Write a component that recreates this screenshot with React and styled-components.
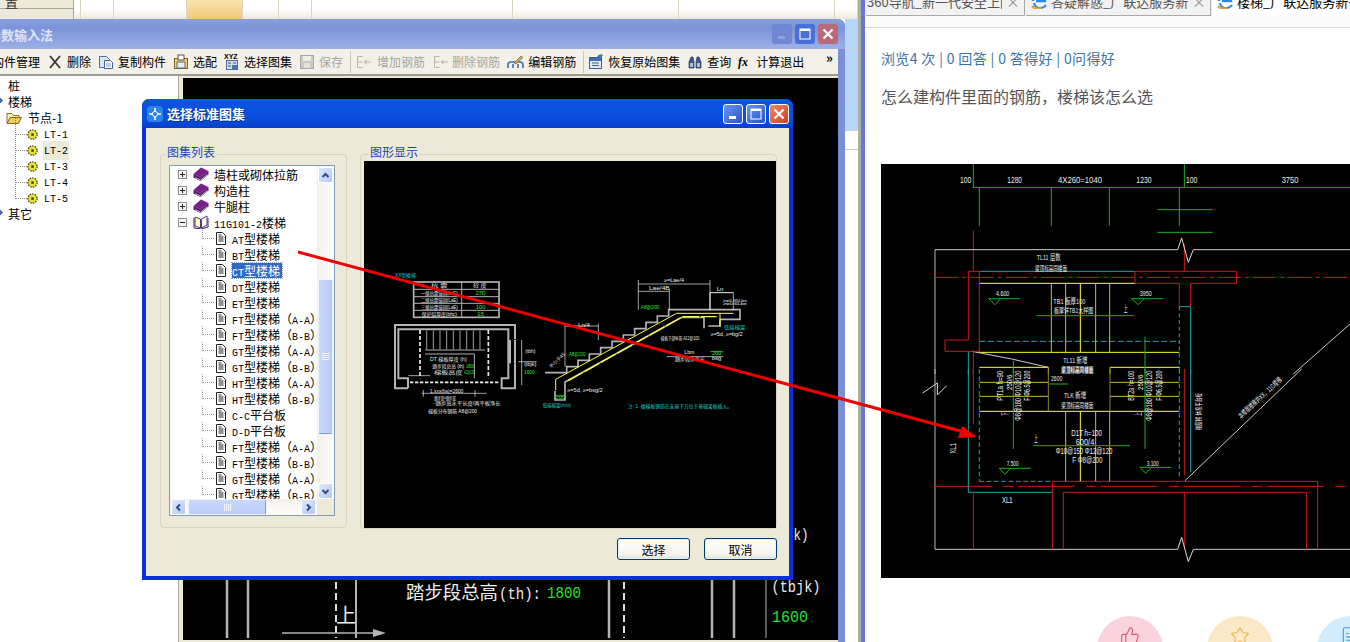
import React from 'react';
import styled, { createGlobalStyle } from 'styled-components';
import { ThumbsUp, Star, FileText } from 'lucide-react';

const Global = createGlobalStyle`
html,body{margin:0;padding:0;background:#fff;}
body{font-family:"Noto Sans CJK SC","Liberation Sans",sans-serif;font-size:12px;color:#000;}
`;

const Desktop = styled.div`
position:relative;
width:1350px;
height:642px;
overflow:hidden;
display:flex;
background:#fff;
`;
const LeftArea = styled.div`
position:relative;
width:858px;
flex:none;
display:flex;
flex-direction:column;
`;
const SheetHeader = styled.div`
height:19px;
display:flex;
flex:none;
`;
const SheetSide = styled.div`
width:74px;
box-sizing:border-box;
background:#ece9d8;
border-right:1px solid #aca899;
overflow:hidden;
color:#333;
flex:none;
`;
const SheetSideLabel = styled.div`
height:12px;
line-height:12px;
margin-top:-4px;
padding-left:5px;
font-size:13px;
border-bottom:1px solid #aca899;
`;
const SheetCell = styled.div`
width:${(p) => p.$w}px;
box-sizing:border-box;
flex:none;
border-right:1px solid #d8d5c4;
background:${(p) => p.$hot ? 'linear-gradient(#fbe3b0,#f2c878)' : 'linear-gradient(#fff 50%,#ece9d8)'};
`;
const SheetBody = styled.div`
flex:1;
display:flex;
flex-direction:column;
align-items:flex-end;
`;
const SideRow = styled.div`
width:13px;
height:${(p) => p.$h}px;
background:${(p) => p.$blue ? '#b5d6f7' : '#fff'};
border-bottom:1px solid #c8d4e0;
flex:none;
`;
const SheetGap = styled.div`
width:13px;
height:18px;
border-bottom:1px solid #ccc;
`;
const Splitter = styled.div`
width:7px;
flex:none;
background:linear-gradient(90deg,#a9b0a8 0,#a9b0a8 3px,#6877d6 3px);
`;

/* outer window */
const OuterWindow = styled.div`
position:absolute;
left:-12px;
top:19px;
width:857px;
height:623px;
display:flex;
flex-direction:column;
background:#7b8fd8;
border-radius:7px 7px 0 0;
`;
const OuterTitle = styled.div`
height:30px;
flex:none;
display:flex;
align-items:center;
justify-content:space-between;
padding:0 7px 0 0;
background:linear-gradient(#8aa0dd,#7b93d9 30%,#9db0e6);
color:#dde4f6;
font-weight:bold;
font-size:13px;
border-radius:7px 7px 0 0;
`;
const TitleButtons = styled.div`
display:flex;
gap:${(p) => p.$gap}px;
`;
const TitleBtn = styled.div`
width:20px;
height:20px;
display:flex;
align-items:center;
justify-content:center;
border-radius:3px;
box-sizing:border-box;
border:1px solid ${(p) => p.$faded ? 'transparent' : '#fff'};
background:${(p) => {
    if (p.$close) return p.$faded ? '#b86a78' : 'linear-gradient(135deg,#ea8a6a,#d2401c)';
    if (p.$off) return '#7088d4';
    return p.$faded ? '#4a70d8' : 'linear-gradient(135deg,#6c96ef,#2552d0)';
  }};
`;
const Toolbar = styled.div`
height:27px;
flex:none;
margin-right:7px;
padding-left:4px;
display:flex;
align-items:center;
gap:7px;
background:#f3f1e7;
white-space:nowrap;
position:relative;
border-bottom:2px solid #9d9c93;
box-sizing:border-box;
`;
const ToolItem = styled.div`
display:flex;
align-items:center;
gap:${(p) => p.$gap ?? 4}px;
color:${(p) => p.$off ? '#a6a6a0' : '#000'};
line-height:16px;
`;
const ToolSep = styled.div`
width:1px;
height:22px;
background:#c9c7ba;
margin:0 -3px 0 0;
flex:none;
`;
const ToolMore = styled.div`
position:absolute;
right:5px;
top:0;
font-size:13px;
font-weight:bold;
line-height:18px;
`;
const OuterMain = styled.div`
flex:1;
display:flex;
min-height:0;
margin-right:7px;
background:#ece9d8;
`;
const LeftTree = styled.div`
width:191px;
flex:none;
padding-top:2px;
background:#fff;
border-right:1px solid #aca899;
box-sizing:border-box;
overflow:hidden;
`;
const MainRow = styled.div`
position:relative;
height:16px;
line-height:16px;
padding-left:${(p) => p.$indent}px;
display:flex;
align-items:center;
gap:5px;
&::before{
  content:${(p) => p.$mark ? '""' : 'none'};
  position:absolute;
  left:9px;
  top:4px;
  width:5px;
  height:5px;
  background:#3c66b4;
  transform:rotate(45deg);
}
&::after{
  content:${(p) => p.$leaf ? '""' : 'none'};
  position:absolute;
  left:27px;
  top:-8px;
  height:16px;
  width:11px;
  border-left:1px dotted #888;
  border-bottom:1px dotted #888;
}
`;
const MainText = styled.span`
padding:0 1px;
background:${(p) => p.$sel ? '#ece9d8' : 'transparent'};
z-index:1;
`;
const CadPanel = styled.div`
flex:1;
margin:2px 0 2px 4px;
background:#000;
overflow:hidden;
`;

/* dialog */
const Dialog = styled.div`
position:absolute;
left:142px;
top:99px;
width:651px;
height:481px;
display:flex;
flex-direction:column;
background:#0831d9;
border-radius:7px 7px 0 0;
z-index:2;
`;
const DialogTitle = styled.div`
height:29px;
flex:none;
padding:0 4px 0 5px;
display:flex;
align-items:center;
justify-content:space-between;
color:#fff;
font-weight:bold;
font-size:13px;
background:linear-gradient(#0a5be6,#0a55e0 10%,#0a4ddc 70%,#0840c8);
border-radius:7px 7px 0 0;
`;
const DialogName = styled.div`
display:flex;
align-items:center;
gap:4px;
text-shadow:1px 1px 0 #03308c;
`;
const DialogBody = styled.div`
flex:1;
margin:0 4px 4px;
padding:26px 12px 0 14px;
background:#ece9d8;
display:flex;
flex-direction:column;
`;
const Groups = styled.div`
display:flex;
gap:13px;
`;
const GroupBox = styled.div`
position:relative;
width:${(p) => p.$w}px;
height:${(p) => p.$h}px;
box-sizing:border-box;
padding:${(p) => p.$pad};
border:1px solid #d6d3c2;
border-radius:4px;
`;
const Legend = styled.div`
position:absolute;
left:${(p) => p.$x}px;
top:-11px;
padding:0 2px;
background:#ece9d8;
color:#1248b8;
line-height:16px;
`;
const ListBox = styled.div`
width:166px;
height:351px;
box-sizing:border-box;
border:1px solid #7f9db9;
background:#fff;
display:grid;
grid-template-columns:147px 17px;
grid-template-rows:333px 16px;
`;
const TreeArea = styled.div`
overflow:hidden;
`;
const TreeRow = styled.div`
position:relative;
height:16px;
display:flex;
align-items:center;
white-space:nowrap;
padding-left:${(p) => p.$leaf ? 45 : 8}px;
gap:5px;
&::before{
  content:${(p) => p.$leaf ? '""' : 'none'};
  position:absolute;
  left:32px;
  top:0;
  height:8px;
  width:11px;
  border-left:1px dotted #999;
  border-bottom:1px dotted #999;
}
`;
const TreeLabel = styled.span`
line-height:15px;
height:15px;
color:${(p) => p.$sel ? '#fff' : '#000'};
background:${(p) => p.$sel ? '#316ac5' : 'transparent'};
outline:${(p) => p.$sel ? '1px dotted #9ab' : 'none'};
padding-right:${(p) => p.$sel ? '2px' : '0'};
`;
const Ascii = styled.span`
font-family:"Liberation Mono",monospace;
font-size:10px;
`;
const ExpandBox = styled.span`
width:9px;
height:9px;
box-sizing:border-box;
border:1px solid #8b8b8b;
background:#f5f4ee;
position:relative;
flex:none;
margin-right:1px;
&::before{
  content:"";
  position:absolute;
  left:1px;
  right:1px;
  top:3px;
  height:1px;
  background:#222;
}
&::after{
  content:${(p) => p.$open ? 'none' : '""'};
  position:absolute;
  top:1px;
  bottom:1px;
  left:3px;
  width:1px;
  background:#222;
}
`;
const VScroll = styled.div`
display:flex;
flex-direction:column;
background:linear-gradient(90deg,#f3f1ec,#fdfdfa);
padding:1px 1px 0 1px;
`;
const HScroll = styled.div`
display:flex;
background:linear-gradient(#f3f1ec,#fdfdfa);
padding:0 1px;
`;
const Corner = styled.div`
background:#ece9d8;
`;
const ScrollBtn = styled.div`
width:15px;
height:16px;
flex:none;
border-radius:2px;
background:linear-gradient(135deg,#dfe9fd,#b3c8f5);
border:1px solid #fff;
box-sizing:border-box;
display:flex;
align-items:center;
justify-content:center;
`;
const TrackV = styled.div`
flex:1;
padding-top:${(p) => p.$top}px;
display:flex;
`;
const ThumbV = styled.div`
width:15px;
height:${(p) => p.$len}px;
box-sizing:border-box;
border-radius:2px;
background:linear-gradient(90deg,#c9d8fc,#b9ccf8);
border:1px solid #eef3fe;
border-bottom-color:#7c9be0;
display:flex;
align-items:center;
justify-content:center;
`;
const TrackH = styled.div`
flex:1;
padding-left:${(p) => p.$left}px;
display:flex;
`;
const ThumbH = styled.div`
height:16px;
width:${(p) => p.$len}px;
box-sizing:border-box;
border-radius:2px;
background:linear-gradient(#c9d8fc,#b9ccf8);
border:1px solid #eef3fe;
border-right-color:#7c9be0;
display:flex;
align-items:center;
justify-content:center;
`;
const Grip = styled.div`
width:7px;
height:7px;
background:${(p) => p.$v
    ? 'repeating-linear-gradient(#f4f7ff 0,#f4f7ff 1px,transparent 1px,transparent 2px)'
    : 'repeating-linear-gradient(90deg,#f4f7ff 0,#f4f7ff 1px,transparent 1px,transparent 2px)'};
`;
const PreviewBox = styled.div`
width:412px;
height:367px;
background:#000;
`;
const DialogFoot = styled.div`
display:flex;
justify-content:flex-end;
gap:14px;
margin-top:9px;
`;
const PushBtn = styled.div`
width:73px;
height:22px;
box-sizing:border-box;
border:1px solid #003c74;
border-radius:3px;
background:linear-gradient(#fff,#f3f2ea 85%,#d8d4c4);
box-shadow:inset 0 0 0 1px #e6f0fa;
display:flex;
align-items:center;
justify-content:center;
`;

/* browser */
const Browser = styled.div`
flex:1;
min-width:0;
display:flex;
flex-direction:column;
overflow:hidden;
`;
const TabStrip = styled.div`
height:16px;
flex:none;
display:flex;
padding-left:1px;
background:#f0f0f0;
`;
const Tab = styled.div`
width:${(p) => p.$w}px;
flex:none;
box-sizing:border-box;
display:flex;
align-items:flex-start;
gap:4px;
padding-left:${(p) => p.$pad}px;
overflow:hidden;
white-space:nowrap;
background:${(p) => p.$active ? '#fff' : '#f2f2f2'};
border-right:1px solid #aaa;
border-bottom:${(p) => p.$active ? 'none' : '1px solid #aaa'};
margin-right:1px;
color:${(p) => p.$active ? '#000' : '#555'};
font-size:13px;
`;
const TabText = styled.span`
flex:1;
min-width:0;
overflow:hidden;
line-height:16px;
margin-top:-6px;
height:20px;
`;
const TabClose = styled.span`
width:18px;
flex:none;
margin-top:-7px;
color:#999;
font-size:14px;
line-height:16px;
`;
const AddressBar = styled.div`
height:11px;
flex:none;
background:#fafafa;
border-bottom:1px solid #ddd;
`;
const Article = styled.div`
flex:1;
padding:20px 0 0 16px;
position:relative;
`;
const Stats = styled.div`
color:#3a72a8;
font-size:14px;
letter-spacing:.35px;
line-height:20px;
height:20px;
`;
const Question = styled.div`
margin-top:17px;
color:#555;
font-size:16px;
line-height:22px;
height:22px;
`;
const ShotBox = styled.div`
margin-top:57px;
width:469px;
height:414px;
background:#000;
`;
const Reactions = styled.div`
display:flex;
gap:44px;
margin:38px 0 0 216px;
`;
const Bubble = styled.div`
width:66px;
height:66px;
flex:none;
border-radius:50%;
background:${(p) => p.$bg};
color:${(p) => p.$fg};
display:flex;
justify-content:center;
padding-top:10px;
box-sizing:border-box;
`;
const Overlay = styled.svg`
position:absolute;
left:0;
top:0;
z-index:5;
pointer-events:none;
`;
const CadSvg = styled.svg`
display:block;
`;
const CadLabel = styled.text`
font-family:"Liberation Sans","Noto Sans CJK SC",sans-serif;
text-anchor:middle;
`;
const BackLabel = styled.text`
font-family:"Liberation Mono","Noto Sans CJK SC",monospace;
text-anchor:middle;
`;

const Latin = ({ text }) => text.split(/([\x00-\x7f]+)/).map((part, i) => (
  /^[\x00-\x7f]+$/.test(part) ? <Ascii key={i}>{part}</Ascii> : part
));

/* small icons */
const WinGlyph = ({ kind, c = '#fff' }) => {
  if (kind === 'min') return <svg width="14" height="14"><rect x="3" y="9" width="7" height="3" fill={c} /></svg>;
  if (kind === 'max') return <svg width="14" height="14"><rect x="2" y="2" width="10" height="10" fill="none" stroke={c} /><rect x="2" y="2" width="10" height="2" fill={c} /></svg>;
  return <svg width="14" height="14"><path d="M2.5 2.5 11.5 11.5M11.5 2.5 2.5 11.5" stroke={c} strokeWidth="2.2" /></svg>;
};
const DeleteIcon = () => <svg width="16" height="16"><path d="M3 2 13 14M13 2 3 14" stroke="#333" strokeWidth="1.8" /></svg>;
const CopyIcon = () => (
  <svg width="16" height="16">
    <path d="M1.5 2.5h7l3 3v8h-10z" fill="#dbe6f6" stroke="#4a6fa8" />
    <path d="M6.5 6.5h6l2 2v6h-8z" fill="#fff" stroke="#3b63a2" />
    <path d="M8 10h5M8 12h5" stroke="#7d9ac6" />
  </svg>
);
const MatchIcon = () => (
  <svg width="16" height="16">
    <rect x="1.5" y="4.5" width="13" height="10" fill="#f2d278" stroke="#7a6320" />
    <rect x="5" y="1" width="6" height="5" fill="#fff" stroke="#555" />
    <rect x="4" y="8" width="8" height="6" fill="#e9edf3" stroke="#5b6b85" />
  </svg>
);
const AtlasIcon = () => (
  <svg width="16" height="18">
    <text x="0" y="6" fontSize="7" fontWeight="bold" fontFamily="Liberation Sans">XYZ</text>
    <rect x="2.5" y="7.5" width="11" height="9" fill="#cfdcf0" stroke="#50698f" />
    <path d="M4 10h3M4 13h3M9 10h3" stroke="#30507f" />
    <path d="M8 12h5v4H8z" fill="#4d75b4" />
  </svg>
);
const SaveIcon = () => (
  <svg width="16" height="16">
    <rect x="1.5" y="1.5" width="13" height="13" fill="#c9c9c3" stroke="#a8a8a2" />
    <rect x="4" y="2" width="8" height="5" fill="#efefea" />
    <rect x="5" y="9" width="6" height="5" fill="#e3e3dd" />
  </svg>
);
const RebarIcon = () => (
  <svg width="18" height="16">
    <path d="M2.5 2.5h5M2.5 2.5v11h5M2.5 8h5M9 8h7M9 8l3-2M9 8l3 2" fill="none" stroke="#b4b4ac" />
  </svg>
);
const EditRebarIcon = () => (
  <svg width="17" height="16">
    <path d="M1 14v-3q0-3 3-3h9q3 0 3 3v3M6 14v-4M11 14v-4" fill="none" stroke="#3f6bb0" strokeWidth="1.6" />
    <path d="M7 9 14 2l2 1.5L9 10z" fill="#d9a94a" stroke="#555" strokeWidth=".6" />
  </svg>
);
const RestoreIcon = () => (
  <svg width="16" height="17">
    <rect x="1.5" y="4.5" width="12" height="11" fill="#dfe8f5" stroke="#3d608f" />
    <rect x="2" y="5" width="11" height="3" fill="#3d6fb5" />
    <path d="M4 10h7M4 12.5h7" stroke="#3d608f" />
    <path d="M9 4q2-4 6-2l-2 3z" fill="#3f78c8" />
  </svg>
);
const BinocularIcon = () => (
  <svg width="16" height="16">
    <path d="M2 14V8l2-5h2l1 5v6zM14 14V8l-2-5h-2L9 8v6z" fill="#40598c" stroke="#26365a" strokeWidth=".7" />
    <rect x="3" y="9" width="3" height="4" fill="#a9bfe4" />
    <rect x="10" y="9" width="3" height="4" fill="#a9bfe4" />
  </svg>
);
const FxIcon = () => (
  <svg width="14" height="16">
    <text x="0" y="12" fontSize="12" fontStyle="italic" fontWeight="bold" fontFamily="Liberation Serif">fx</text>
  </svg>
);
const FolderIcon = () => (
  <svg width="16" height="14">
    <path d="M1 12V2.5h5l1.5 2H13V7" fill="#fff3b8" stroke="#8a6a20" />
    <path d="M1 12.5 4 6.5h11.5l-3 6z" fill="#f0c85a" stroke="#8a6a20" />
  </svg>
);
const GearIcon = () => (
  <svg width="11" height="11">
    <circle cx="5.5" cy="5.5" r="4.6" fill="#e9e23a" stroke="#5b5a20" strokeWidth="1.4" strokeDasharray="1.6 1" />
    <circle cx="5.5" cy="5.5" r="1.5" fill="#55531a" />
  </svg>
);
const BookIcon = () => (
  <svg width="16" height="15">
    <path d="M0.5 7 8 0.5 15.5 4 7.5 10.5z" fill="#7a1f8c" />
    <path d="M0.5 7 7.5 10.5 15.5 4v3.5L7.5 14 0.5 10.5z" fill="#561064" />
    <path d="M2 10.5 7.5 13 14.5 7.5" fill="none" stroke="#c8c8c8" />
  </svg>
);
const OpenBookIcon = () => (
  <svg width="16" height="14">
    <path d="M2 2 7.5 4v9L2 11z" fill="#fdf7c6" stroke="#5b3a78" />
    <path d="M14 1 8.5 4v9L14 10z" fill="#fff" stroke="#5b3a78" />
    <path d="M1 3v10l7 1 7-2V3" fill="none" stroke="#3b245a" />
  </svg>
);
const DocIcon = () => (
  <svg width="12" height="15" style={{ flex: 'none' }}>
    <path d="M1.5 1.5h6l3 3v9h-9z" fill="#fff" stroke="#222" />
    <path d="M3.5 6h5M3.5 8h5M3.5 10h5M3.5 4h3" stroke="#222" />
  </svg>
);
const AppGlyph = () => (
  <svg width="16" height="16">
    <rect x="0" y="0" width="16" height="16" rx="4" fill="#2a84ea" />
    <path d="M8 2v12M2 8h12" stroke="#fff" strokeWidth="1.6" />
    <circle cx="8" cy="8" r="2.6" fill="#2a84ea" stroke="#fff" />
  </svg>
);
const Chevron = ({ dir }) => {
  const d = { up: 'M1.5 6 4.5 3l3 3', down: 'M1.5 3 4.5 6l3-3', left: 'M6 1.5 3 4.5l3 3', right: 'M3 1.5 6 4.5l-3 3' }[dir];
  return <svg width="9" height="9"><path d={d} fill="none" stroke="#2f4e86" strokeWidth="2" /></svg>;
};
const IeIcon = () => (
  <svg width="16" height="16" style={{ flex: 'none', marginTop: -7 }}>
    <path d="M2 8a6 6 0 0 1 12 0H5" fill="none" stroke="#2d8ae0" strokeWidth="2.4" />
    <path d="M3 10q1 5 6 5 4 0 6-3" fill="none" stroke="#2d8ae0" strokeWidth="2" />
    <path d="M1 13q3 4 9 2" fill="none" stroke="#f0a030" strokeWidth="2.2" />
  </svg>
);

/* cad helpers */
const Seg = ({ items }) => items.map(([x1, y1, x2, y2, c, w = 3, dash], i) => (
  <line key={i} x1={x1} y1={y1} x2={x2} y2={y2} stroke={c} strokeWidth={w} strokeDasharray={dash} />
));
const Lab = ({ x, y, w, s = 26, c = '#eee', rot, t }) => (
  <CadLabel x={x} y={y} fontSize={s} fill={c} textLength={w} lengthAdjust="spacingAndGlyphs"
    transform={rot ? `rotate(${rot} ${x} ${y})` : undefined}>{t}</CadLabel>
);

const G = '#b4b4b4', Y = '#ffff33', C = '#18d0d0', GR = '#22ee22', W = '#eee', R = '#d01818', DG = '#1eb01e', CY = '#1fa8a8', DY = '#c4c430';

const steps = () => {
  let d = 'M495 338H560V320';
  let x = 560, y = 320;
  for (let i = 0; i < 9; i++) {
    x += 34;
    d += `H${x}`;
    y -= 19;
    d += `V${y}`;
  }
  return d + 'H1080V178H1020';
};

const PreviewDrawing = () => (
  <CadSvg width="412" height="367" viewBox="364 161 412 367">
    <g transform="translate(380 260) scale(.33333)">
      <Lab x={78} y={50} w={66} s={14} c={C} t="XX型楼梯:" />
      <rect x="101" y="66" width="256" height="106" fill="none" stroke={G} strokeWidth="5" />
      <Seg items={[[101, 88, 357, 88, G], [101, 110, 357, 110, G], [101, 130, 357, 130, G], [101, 151, 357, 151, G], [245, 66, 245, 172, G]]} />
      <Lab x={178} y={82} w={50} s={14} t="抗 震" />
      <Lab x={300} y={82} w={40} s={14} t="砼 度" />
      <Lab x={178} y={104} w={110} s={14} t="一级抗震锚固(LaE)" />
      <Lab x={178} y={125} w={110} s={14} t="二级抗震锚固(LaE)" />
      <Lab x={178} y={146} w={110} s={14} t="三级抗震锚固(LaE)" />
      <Lab x={178} y={167} w={105} s={14} t="保护层厚度(bhc)" />
      <Lab x={302} y={104} w={30} s={14} c={GR} t="27D" />
      <Lab x={302} y={146} w={30} s={14} c={GR} t="100" />
      <Lab x={302} y={167} w={20} s={14} c={GR} t="15" />
      <path d="M84 385H45V195H405V238M405 310V385H365V355H385V208H55V355H84V385" fill="none" stroke={G} strokeWidth="6" />
      <Seg items={[[90, 367, 360, 367, W, 5, '10 5'], [120, 210, 120, 355, W, 5, '12 6'], [325, 210, 325, 355, W, 5, '12 6'],
        [390, 240, 390, 310, G, 6], [405, 240, 405, 310, G, 6], [135, 270, 315, 270, G, 3], [135, 282, 283, 282, G, 3], [283, 282, 283, 355, G, 3],
        [140, 212, 140, 268, W, 2], [160, 212, 160, 268, W, 2], [180, 212, 180, 268, W, 2], [200, 212, 200, 268, W, 2], [220, 212, 220, 268, W, 2], [240, 212, 240, 268, W, 2], [260, 212, 260, 268, W, 2], [280, 212, 280, 268, W, 2], [300, 212, 300, 268, W, 2],
        [85, 347, 150, 347, W, 2], [425, 240, 425, 375, W, 2], [415, 305, 470, 305, W, 2], [125, 400, 320, 400, W, 2], [130, 390, 130, 410, W, 2], [285, 390, 285, 410, W, 2]]} />
      <Lab x={205} y={304} w={110} s={14} t="DT 梯板厚度 (h)" />
      <Lab x={205} y={323} w={95} s={14} t="踏步段总高 (th)" />
      <Lab x={205} y={343} w={85} s={14} t="梯板高度" />
      <Lab x={270} y={323} w={24} s={14} c={GR} t="1800" />
      <Lab x={267} y={343} w={30} s={14} c={GR} t="A12@120" />
      <Lab x={451} y={280} w={30} s={14} t="(tbh)" />
      <Lab x={451} y={317} w={36} s={14} t="(tbjk)" />
      <Lab x={448} y={342} w={32} s={14} c={GR} t="1600" />
      <Lab x={200} y={400} w={100} s={14} t="1.xxx(bs)=2600" />
      <Lab x={195} y={420} w={65} s={14} t="踏步宽=踏步宽" />
      <Lab x={262} y={436} w={200} s={14} t="-踏步高水平长度/两平板净长" />
      <Lab x={218} y={460} w={146} s={14} t="梯板分布钢筋 A8@200" />
      <path d={steps()} fill="none" stroke={G} strokeWidth="5" />
      <path d="M525 392V420H555V366L905 172H972V205M985 198H1020V178" fill="none" stroke={G} strokeWidth="5" />
      <path d="M527 358 890 160H1060" fill="none" stroke={Y} strokeWidth="3" />
      <path d="M565 362 890 180 910 170H1010" fill="none" stroke={Y} strokeWidth="4" strokeDasharray="50 6" />
      <Seg items={[[527, 358, 527, 390, Y, 3], [1020, 160, 1020, 200, Y, 3], [775, 72, 990, 72, W, 2], [775, 60, 775, 150, W, 2], [990, 60, 990, 150, W, 2], [775, 94, 868, 94, W, 2], [868, 88, 868, 150, W, 2],
        [990, 98, 1060, 98, W, 3], [990, 98, 990, 150, W, 3], [1060, 98, 1060, 150, W, 2], [555, 198, 655, 198, W, 2], [555, 190, 555, 320, W, 2], [655, 190, 655, 240, W, 2], [860, 290, 1030, 290, W, 2], [525, 408, 556, 408, GR, 2], [990, 275, 1030, 275, GR, 2]]} />
      <Lab x={882} y={67} w={60} s={14} t="≥=Lae/4" />
      <Lab x={838} y={90} w={62} s={14} t="Lae/4B" />
      <Lab x={1020} y={92} w={20} s={14} t="Ln" />
      <Lab x={1065} y={125} w={72} s={13} t="≥=0.35Lbe" />
      <Lab x={1065} y={136} w={72} s={13} t="≥=0.6Lbe" />
      <Lab x={810} y={147} w={55} s={14} c={GR} t="A8@200" />
      <Lab x={612} y={201} w={36} s={14} t="Ln/4" />
      <Lab x={592} y={288} w={50} s={14} c={GR} t="A8@200" />
      <Lab x={900} y={240} w={115} s={14} t="梯板下部纵筋 A12@100" />
      <Lab x={1064} y={208} w={64} s={14} c={C} t="低端梯梁" />
      <Lab x={1040} y={228} w={96} s={14} t="≥=5d, ≥=bg/2" />
      <Lab x={928} y={282} w={30} s={14} t="Lbm" />
      <Lab x={1010} y={285} w={28} s={14} c={GR} t="200" />
      <Lab x={1010} y={301} w={28} s={14} t="bsg" />
      <Lab x={930} y={302} w={90} s={14} t="踏步段水平长" />
      <Lab x={615} y={395} w={106} s={14} t="≥=5d, ≥=bsg/2" />
      <Lab x={541} y={416} w={30} s={14} c={GR} t="200" />
      <Lab x={530} y={440} w={84} s={14} c={C} t="低端梯梁(mm)" />
      <Lab x={900} y={445} w={312} s={14} c={C} t="注: 1. 楼梯板钢筋在支座下方位于基础梁板插入。" />
      <Lab x={535} y={305} w={60} s={14} rot={-45} t="不小于45" />
    </g>
  </CadSvg>
);

const ShotDrawing = () => (
  <CadSvg width="469" height="414" viewBox="881 165 469 414">
    <g transform="translate(880 165) scale(.33333)">
      <Seg items={[[280, 0, 280, 70, DG], [913, 0, 913, 70, DG], [278, 70, 1410, 70, DG], [298, 70, 298, 185, DG], [514, 70, 514, 185, DG], [688, 70, 688, 185, DG], [898, 70, 898, 185, DG],
        [832, 137, 998, 137, DG], [832, 205, 998, 205, DG], [280, 200, 280, 322, R], [913, 240, 913, 322, R],
        [165, 257, 893, 257, '#ccc'], [940, 257, 1410, 257, '#ccc'], [165, 257, 165, 630, G],
        [265, 322, 298, 322, R], [265, 322, 265, 528, R], [298, 322, 765, 322, CY], [298, 358, 765, 358, Y], [298, 322, 298, 565, R], [165, 340, 1410, 340, R, 3, '70 12 12 12'],
        [898, 358, 898, 428, R], [932, 358, 932, 428, R], [898, 428, 932, 428, CY], [932, 428, 932, 630, CY],
        [898, 428, 898, 630, CY, 3, '12 8'], [298, 532, 898, 532, CY, 3, '18 8'], [280, 565, 280, 630, R], [265, 562, 265, 630, CY],
        [514, 358, 514, 565, DY], [557, 358, 557, 565, DY], [601, 358, 601, 565, Y], [647, 358, 647, 565, DY], [689, 358, 689, 565, DY], [298, 565, 898, 565, Y],
        [298, 610, 505, 610, Y], [690, 610, 898, 610, Y], [505, 610, 505, 630, DY], [690, 610, 690, 630, DY],
        [326, 404, 420, 404, DG], [755, 404, 850, 404, DG], [470, 455, 760, 455, DG], [795, 518, 795, 630, DG], [400, 590, 400, 630, DG],
        [275, 562, 395, 585, '#ccc'], [395, 585, 505, 610, '#ccc'], [1240, 630, 1410, 480, '#ccc']]} />
      <path d="M893 257 905 222 925 295 940 257" fill="none" stroke="#ddd" strokeWidth="3" />
      <path d="M765 322H1070V358H932M898 358H765V322M265 528H195V562H298" fill="none" stroke={R} strokeWidth="3" />
      <path d="M326 404 345 422 362 404M755 404 775 422 792 404" fill="none" stroke={DG} strokeWidth="3" />
      <Lab x={257} y={58} w={34} t="100" />
      <Lab x={404} y={58} w={44} t="1280" />
      <Lab x={600} y={58} w={132} t="4X260=1040" />
      <Lab x={792} y={58} w={46} t="1230" />
      <Lab x={935} y={58} w={34} t="100" />
      <Lab x={1230} y={58} w={50} t="3750" />
      <Lab x={506} y={287} w={72} s={24} t="TL11 层数" />
      <Lab x={513} y={320} w={96} s={20} t="梁顶标高同楼面" />
      <Lab x={368} y={397} w={40} s={20} t="4.600" />
      <Lab x={797} y={397} w={36} s={20} t="3950" />
      <Lab x={568} y={419} w={96} s={24} t="TB1 板厚100" />
      <Lab x={581} y={447} w={118} s={22} t="板厚详TB1大样图" />
      <Lab x={737} y={445} w={10} s={26} t="上" />
      <Lab x={586} y={597} w={72} s={24} t="TL11 新增" />
      <Lab x={592} y={628} w={96} s={20} t="梁顶标高同楼面" />
    </g>
    <g transform="translate(880 370) scale(.33333)">
      <Seg items={[[165, 0, 165, 541, G], [165, 541, 893, 541, '#ccc'], [940, 541, 1410, 541, '#ccc'], [165, 352, 1410, 352, R, 3, '170 35 30 14'],
        [265, 0, 265, 370, CY], [265, 370, 517, 370, CY], [298, 337, 517, 337, CY, 3, '14 8'], [298, 0, 298, 337, CY, 3, '14 8'], [898, 0, 898, 330, CY, 3, '14 8'], [932, 0, 932, 310, CY],
        [913, 0, 913, 320, R], [280, 0, 280, 165, R], [280, 370, 280, 541, R], [517, 337, 1313, 337, R], [517, 337, 517, 541, R], [1313, 337, 1313, 541, R], [550, 370, 1280, 370, R], [550, 370, 550, 541, R], [1280, 370, 1280, 541, R], [913, 370, 913, 541, R],
        [298, 127, 898, 127, Y], [298, 82, 505, 82, DY], [690, 82, 898, 82, DY], [298, 40, 505, 40, DY], [690, 40, 898, 40, DY], [505, 0, 505, 127, '#888820'], [690, 0, 690, 127, '#888820'],
        [557, 127, 557, 337, DY], [601, 127, 601, 337, Y], [647, 127, 647, 337, DY], [689, 127, 689, 337, DY],
        [400, 0, 400, 240, DG], [795, 0, 795, 240, DG], [460, 230, 750, 230, '#109010', 4], [508, 45, 565, 45, DG],
        [358, 298, 452, 298, DG], [780, 295, 873, 295, DG], [915, 335, 1265, 0, '#ccc']]} />
      <path d="M893 541 905 505 925 578 940 541M128 72 172 42V78L200 50" fill="none" stroke="#ddd" strokeWidth="3" />
      <path d="M358 298 375 316 392 298M780 295 797 313 814 295" fill="none" stroke={DG} strokeWidth="3" />
      <Lab x={530} y={35} w={34} s={24} t="2600" />
      <Lab x={592} y={10} w={96} s={20} t="梁顶标高同楼面" />
      <Lab x={585} y={87} w={66} s={24} t="TLK 新增" />
      <Lab x={592} y={116} w={96} s={20} t="梁顶标高同楼面" />
      <Lab x={620} y={200} w={92} t="D1T h=100" />
      <Lab x={615} y={228} w={56} t="600/4" />
      <Lab x={612} y={254} w={170} t="Φ10@150 Φ12@120" />
      <Lab x={622} y={282} w={90} t="F Φ8@200" />
      <Lab x={382} y={402} w={32} t="XL1" />
      <Lab x={227} y={238} w={32} rot={-90} t="XL1" />
      <Lab x={370} y={50} w={90} rot={-90} t="PT1a h=90" />
      <Lab x={396} y={40} w={46} rot={-90} s={20} t="250/6" />
      <Lab x={423} y={80} w={150} rot={-90} t="Φ8@180 Φ10@120" />
      <Lab x={450} y={50} w={90} rot={-90} t="F Φ6.5@200" />
      <Lab x={762} y={50} w={90} rot={-90} t="BT2a h=100" />
      <Lab x={788} y={40} w={46} rot={-90} s={20} t="250/6" />
      <Lab x={815} y={80} w={150} rot={-90} t="Φ8@180 Φ10@120" />
      <Lab x={845} y={50} w={90} rot={-90} t="F Φ6.5@200" />
      <Lab x={962} y={128} w={112} rot={-90} s={22} t="楼层梯 休息平台板" />
      <Lab x={1145} y={92} w={170} rot={-43} s={22} t="本楼层楼梯共XX，11G楼梯" />
      <Lab x={398} y={292} w={36} s={20} t="7.500" />
      <Lab x={818} y={290} w={36} s={20} t="3.100" />
      <Lab x={468} y={220} w={10} s={26} t="上" />
      <Lab x={782} y={135} w={10} s={24} rot={-90} t="上" />
      <Lab x={385} y={135} w={10} s={24} rot={-90} t="下" />
    </g>
  </CadSvg>
);

const BackCad = () => (
  <CadSvg width="655" height="560" viewBox="183 78 655 560">
    <Seg items={[[227, 560, 227, 640, G, 2.5], [248, 560, 248, 640, G, 2.5], [336, 560, 336, 640, '#ddd', 2, '7 4'], [356, 560, 356, 640, G, 2], [609, 560, 609, 640, G, 2.5], [624, 560, 624, 640, '#ddd', 2, '7 4'], [712, 560, 712, 640, G, 2.5], [734, 560, 734, 640, G, 2.5], [766, 560, 766, 640, G, 1], [282, 633, 376, 633, G, 1.5]]} />
    <path d="M373 629 386 633 373 637z" fill={G} />
    <BackLabel x={452} y={599} fontSize="18" fill="#eee" textLength="92" lengthAdjust="spacingAndGlyphs">踏步段总高</BackLabel>
    <BackLabel x={520} y={599} fontSize="16" fill="#eee" textLength="42" lengthAdjust="spacingAndGlyphs">(th):</BackLabel>
    <BackLabel x={564} y={598} fontSize="17" fill="#28e028" textLength="34" lengthAdjust="spacingAndGlyphs">1800</BackLabel>
    <BackLabel x={801} y={540} fontSize="17" fill="#eee" textLength="15" lengthAdjust="spacingAndGlyphs">k)</BackLabel>
    <BackLabel x={796} y={592} fontSize="17" fill="#eee" textLength="49" lengthAdjust="spacingAndGlyphs">(tbjk)</BackLabel>
    <BackLabel x={790} y={622} fontSize="17" fill="#28e028" textLength="36" lengthAdjust="spacingAndGlyphs">1600</BackLabel>
    <BackLabel x={346} y={623} fontSize="20" fill="#eee">上</BackLabel>
  </CadSvg>
);

const tools = [
  { text: '构件管理' },
  { icon: <DeleteIcon />, text: '删除' },
  { icon: <CopyIcon />, text: '复制构件' },
  { icon: <MatchIcon />, text: '选配' },
  { icon: <AtlasIcon />, text: '选择图集' },
  { icon: <SaveIcon />, text: '保存', off: true },
  { sep: true },
  { icon: <RebarIcon />, text: '增加钢筋', off: true },
  { icon: <RebarIcon />, text: '删除钢筋', off: true, gap: 2 },
  { icon: <EditRebarIcon />, text: '编辑钢筋' },
  { sep: true },
  { icon: <RestoreIcon />, text: '恢复原始图集' },
  { icon: <BinocularIcon />, text: '查询' },
  { icon: <FxIcon />, text: '计算退出' },
];

const listItems = ['AT型楼梯', 'BT型楼梯', 'CT型楼梯', 'DT型楼梯', 'ET型楼梯', 'FT型楼梯（A-A）', 'FT型楼梯（B-B）', 'GT型楼梯（A-A）', 'GT型楼梯（B-B）',
  'HT型楼梯（A-A）', 'HT型楼梯（B-B）', 'C-C平台板', 'D-D平台板', 'FT型楼梯（A-A）', 'FT型楼梯（B-B）', 'GT型楼梯（A-A）', 'GT型楼梯（B-B）'];

export default function App() {
  return (
    <Desktop>
      <Global />
      <LeftArea>
        <SheetHeader>
          <SheetSide><SheetSideLabel>置</SheetSideLabel></SheetSide>
          <SheetCell $w={7} />
          {[33, 73].map((w) => <SheetCell key={w} $w={w} />)}
          <SheetCell $w={56} $hot />
          {[36, 33, 201, 166, 156].map((w) => <SheetCell key={w} $w={w} />)}
          <SheetCell $w={23} />
        </SheetHeader>
        <SheetBody>
          <SideRow $h={29} $blue />
          <SideRow $h={50} $blue />
          <SideRow $h={30} $blue />
          <SheetGap />
        </SheetBody>
        <OuterWindow>
          <OuterTitle>
            参数输入法
            <TitleButtons $gap={3}>
              <TitleBtn $faded $off><WinGlyph kind="min" c="#8ea2de" /></TitleBtn>
              <TitleBtn $faded><WinGlyph kind="max" /></TitleBtn>
              <TitleBtn $faded $close><WinGlyph kind="x" /></TitleBtn>
            </TitleButtons>
          </OuterTitle>
          <Toolbar>
            {tools.map((t, i) => (t.sep ? <ToolSep key={i} /> : (
              <ToolItem key={i} $off={t.off} $gap={t.gap}>{t.icon}{t.text}</ToolItem>
            )))}
            <ToolMore>»</ToolMore>
          </Toolbar>
          <OuterMain>
            <LeftTree>
              <MainRow $indent={20}>桩</MainRow>
              <MainRow $indent={20} $mark>楼梯</MainRow>
              <MainRow $indent={18}><FolderIcon /><MainText>节点-1</MainText></MainRow>
              {[1, 2, 3, 4, 5].map((n) => (
                <MainRow key={n} $indent={39} $leaf>
                  <GearIcon />
                  <MainText $sel={n === 2}><Latin text={`LT-${n}`} /></MainText>
                </MainRow>
              ))}
              <MainRow $indent={20} $mark>其它</MainRow>
            </LeftTree>
            <CadPanel><BackCad /></CadPanel>
          </OuterMain>
        </OuterWindow>
        <Dialog>
          <DialogTitle>
            <DialogName><AppGlyph />选择标准图集</DialogName>
            <TitleButtons $gap={3}>
              <TitleBtn><WinGlyph kind="min" /></TitleBtn>
              <TitleBtn><WinGlyph kind="max" /></TitleBtn>
              <TitleBtn $close><WinGlyph kind="x" /></TitleBtn>
            </TitleButtons>
          </DialogTitle>
          <DialogBody>
            <Groups>
              <GroupBox $w={187} $h={374} $pad="10px 11px 0 8px">
                <Legend $x={4}>图集列表</Legend>
                <ListBox>
                  <TreeArea>
                    <TreeRow><ExpandBox /><BookIcon /><TreeLabel>墙柱或砌体拉筋</TreeLabel></TreeRow>
                    <TreeRow><ExpandBox /><BookIcon /><TreeLabel>构造柱</TreeLabel></TreeRow>
                    <TreeRow><ExpandBox /><BookIcon /><TreeLabel>牛腿柱</TreeLabel></TreeRow>
                    <TreeRow><ExpandBox $open /><OpenBookIcon /><TreeLabel><Latin text="11G101-2" />楼梯</TreeLabel></TreeRow>
                    {listItems.map((item, i) => (
                      <TreeRow key={i} $leaf>
                        <DocIcon />
                        <TreeLabel $sel={i === 2}><Latin text={item} /></TreeLabel>
                      </TreeRow>
                    ))}
                  </TreeArea>
                  <VScroll>
                    <ScrollBtn><Chevron dir="up" /></ScrollBtn>
                    <TrackV $top={96}><ThumbV $len={155}><Grip $v /></ThumbV></TrackV>
                    <ScrollBtn><Chevron dir="down" /></ScrollBtn>
                  </VScroll>
                  <HScroll>
                    <ScrollBtn><Chevron dir="left" /></ScrollBtn>
                    <TrackH $left={2}><ThumbH $len={78}><Grip /></ThumbH></TrackH>
                    <ScrollBtn><Chevron dir="right" /></ScrollBtn>
                  </HScroll>
                  <Corner />
                </ListBox>
              </GroupBox>
              <GroupBox $w={417} $h={375} $pad="6px 0 0 3px">
                <Legend $x={7}>图形显示</Legend>
                <PreviewBox><PreviewDrawing /></PreviewBox>
              </GroupBox>
            </Groups>
            <DialogFoot>
              <PushBtn>选择</PushBtn>
              <PushBtn>取消</PushBtn>
            </DialogFoot>
          </DialogBody>
        </Dialog>
      </LeftArea>
      <Splitter />
      <Browser>
        <TabStrip>
          <Tab $w={159} $pad={1}><TabText>360导航_新一代安全上网导航</TabText><TabClose>×</TabClose></Tab>
          <Tab $w={185} $pad={5}><IeIcon /><TabText>答疑解惑_广联达服务新干线</TabText><TabClose>×</TabClose></Tab>
          <Tab $w={140} $pad={5} $active><IeIcon /><TabText>楼梯_广联达服务新干线</TabText></Tab>
        </TabStrip>
        <AddressBar />
        <Article>
          <Stats>浏览4 次 | 0 回答 | 0 答得好 | 0问得好</Stats>
          <Question>怎么建构件里面的钢筋，楼梯该怎么选</Question>
          <ShotBox><ShotDrawing /></ShotBox>
          <Reactions>
            <Bubble $bg="#fbd3de" $fg="#e0566f"><ThumbsUp size={20} strokeWidth={1.3} /></Bubble>
            <Bubble $bg="#fbe8c8" $fg="#e9b552"><Star size={20} strokeWidth={1.3} /></Bubble>
            <Bubble $bg="#d3ecfb" $fg="#4a9ad8"><FileText size={20} strokeWidth={1.3} /></Bubble>
          </Reactions>
        </Article>
      </Browser>
      <Overlay width="1350" height="642" viewBox="0 0 1350 642">
        <line x1="298" y1="252" x2="964" y2="432" stroke="#f00000" strokeWidth="3" />
        <path d="M977 437 958 438 962 426z" fill="#f00000" />
      </Overlay>
    </Desktop>
  );
}
